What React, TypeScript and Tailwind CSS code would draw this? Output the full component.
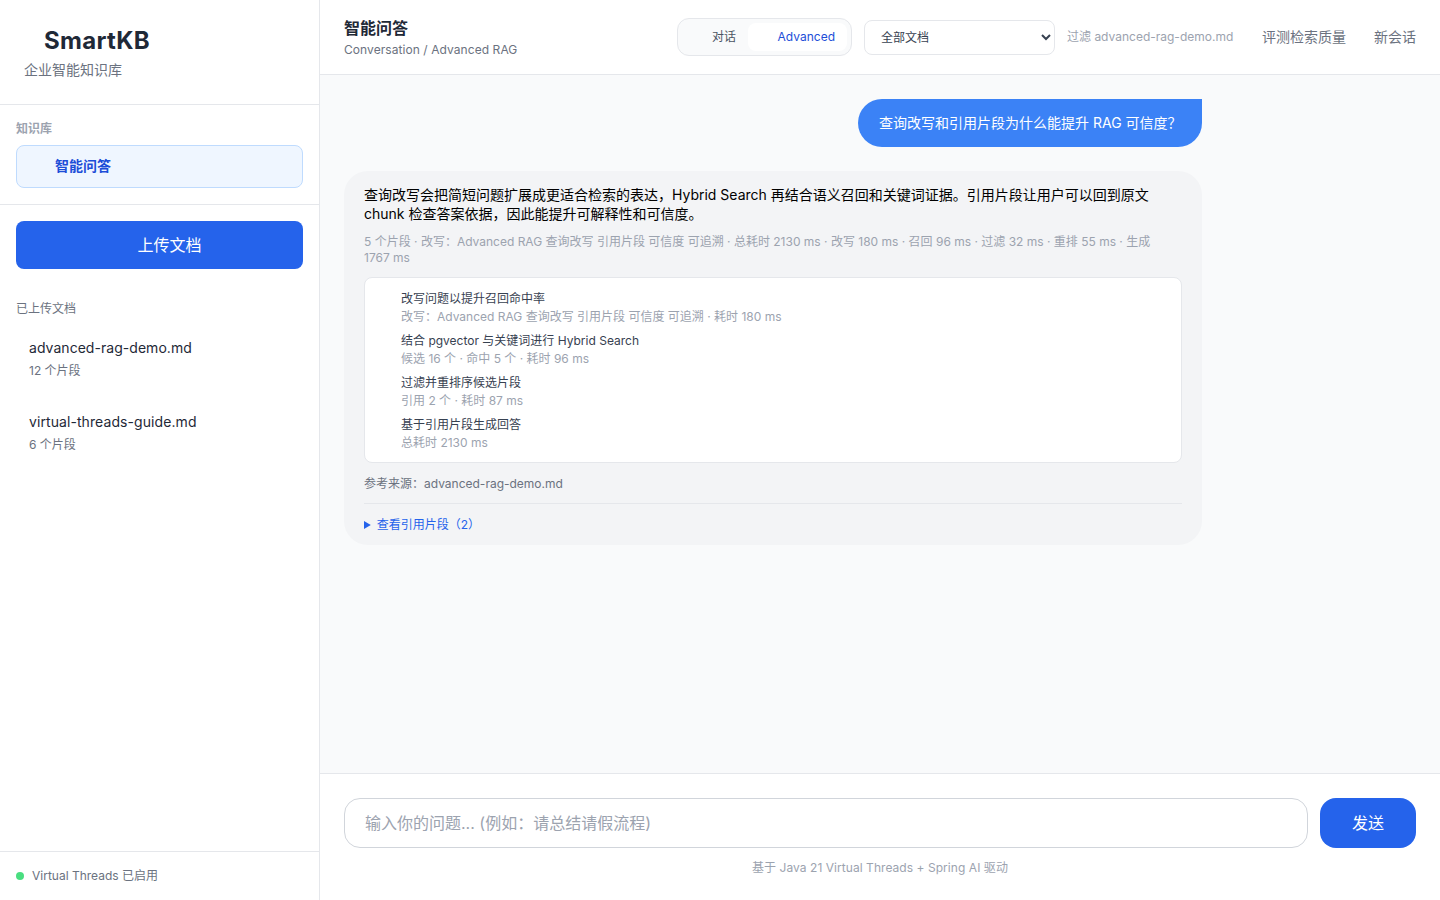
import React from "react";

const steps = [
  ["改写问题以提升召回命中率", "改写：Advanced RAG 查询改写 引用片段 可信度 可追溯 · 耗时 180 ms"],
  ["结合 pgvector 与关键词进行 Hybrid Search", "候选 16 个 · 命中 5 个 · 耗时 96 ms"],
  ["过滤并重排序候选片段", "引用 2 个 · 耗时 87 ms"],
  ["基于引用片段生成回答", "总耗时 2130 ms"],
];

export default function App() {
  return (
    <div className="flex h-screen w-full overflow-hidden bg-[#f9fafb] text-[#1f2937] font-['Inter','Noto_Sans_CJK_SC',sans-serif]">
      <aside className="flex w-80 shrink-0 flex-col border-r border-[#e5e7eb] bg-white">
        <div className="h-[105px] border-b border-[#e5e7eb] px-6 pt-[25px]">
          <h1 className="pl-5 text-2xl leading-8 font-bold tracking-[0.3px] text-[#1f2937]">SmartKB</h1>
          <p className="mt-[3px] text-sm leading-5 text-[#6b7280]">企业智能知识库</p>
        </div>
        <div className="h-[100px] border-b border-[#e5e7eb] px-4 pt-4">
          <div className="text-xs leading-4 font-semibold text-[#9ca3af]">知识库</div>
          <div className="mt-2 flex h-[43px] items-center rounded-lg border border-[#bfdbfe] bg-[#eff6ff] pb-0.5 pl-[38px] text-sm font-semibold text-[#1d4ed8]">智能问答</div>
        </div>
        <div className="flex-1 p-4">
          <button className="h-12 w-full rounded-lg bg-[#2563eb] pl-5 text-base text-white">上传文档</button>
          <div className="mt-8 text-xs leading-4 text-[#6b7280]">已上传文档</div>
          <ul className="mt-[21px] flex flex-col gap-[33px] pl-[13px]">
            <li>
              <div className="text-sm leading-5 tracking-[0.04px] text-[#1f2937]">advanced-rag-demo.md</div>
              <div className="mt-[5px] text-xs leading-4 text-[#6b7280]">12 个片段</div>
            </li>
            <li>
              <div className="text-sm leading-5 tracking-[0.08px] text-[#1f2937]">virtual-threads-guide.md</div>
              <div className="mt-[5px] text-xs leading-4 text-[#6b7280]">6 个片段</div>
            </li>
          </ul>
        </div>
        <div className="flex h-[49px] items-center gap-2 border-t border-[#e5e7eb] px-4 text-xs text-[#6b7280]">
          <span className="h-2 w-2 rounded-full bg-[#4ade80]" />
          Virtual Threads 已启用
        </div>
      </aside>

      <main className="flex min-w-0 flex-1 flex-col">
        <header className="flex h-[75px] shrink-0 items-center justify-between border-b border-[#e5e7eb] bg-white px-6">
          <div>
            <div className="text-base leading-6 font-semibold text-[#1f2937]">智能问答</div>
            <div className="mt-0.5 text-xs leading-4 tracking-[0.07px] text-[#6b7280]">Conversation / Advanced RAG</div>
          </div>
          <div className="flex items-center">
            <div className="flex h-[38px] w-[175px] items-center justify-between rounded-xl border border-[#e5e7eb] bg-[#f9fafb] pr-[4px] pl-[34px] text-xs">
              <span className="text-[#4b5563]">对话</span>
              <span className="flex h-7 w-[99px] items-center justify-end rounded-lg bg-white pr-3 text-[#1d4ed8]">Advanced</span>
            </div>
            <select className="ml-3 h-[35px] w-[191px] rounded-lg border border-[#e5e7eb] bg-white pl-3 text-xs text-[#374151]" defaultValue="all">
              <option value="all">全部文档</option>
            </select>
            <span className="ml-[12px] w-[167px] text-xs whitespace-nowrap text-[#9ca3af]">过滤 advanced-rag-demo.md</span>
            <button className="ml-7 text-sm text-[#6b7280]">评测检索质量</button>
            <button className="ml-7 text-sm text-[#6b7280]">新会话</button>
          </div>
        </header>

        <section className="flex flex-1 flex-col gap-6 overflow-hidden px-6 pt-6">
          <div className="flex max-w-[80%] justify-end">
            <div className="flex h-12 items-center rounded-3xl rounded-tr-none bg-[#3b82f6] pr-5 pl-[21px] text-sm text-white">
              查询改写和引用片段为什么能提升 RAG 可信度？
            </div>
          </div>
          <div className="max-w-[80%] rounded-3xl bg-[#f3f4f6] p-5 pt-[14px] pb-3">
            <p className="text-sm leading-[19px] text-black">
              查询改写会把简短问题扩展成更适合检索的表达，Hybrid Search 再结合语义召回和关键词证据。引用片段让用户可以回到原文 chunk 检查答案依据，因此能提升可解释性和可信度。
            </p>
            <p className="mt-[11px] text-xs leading-4 text-[#9ca3af]">
              5 个片段 · 改写：Advanced RAG 查询改写 引用片段 可信度 可追溯 · 总耗时 2130 ms · 改写 180 ms · 召回 96 ms · 过滤 32 ms · 重排 55 ms · 生成
              <br />
              1767 ms
            </p>
            <div className="mt-[11px] flex flex-col gap-[6px] rounded-lg border border-[#e5e7eb] bg-white pt-3 pr-4 pb-[10px] pl-9">
              {steps.map(([title, detail]) => (
                <div key={title}>
                  <div className="text-xs leading-[18px] text-[#374151]">{title}</div>
                  <div className="text-xs leading-[18px] text-[#9ca3af]">{detail}</div>
                </div>
              ))}
            </div>
            <div className="mt-[13px] text-xs leading-4 text-[#6b7280]">参考来源：advanced-rag-demo.md</div>
            <div className="mt-[11px] border-t border-[#e5e7eb] pt-[13px]">
              <details>
                <summary className="text-xs leading-4 text-[#2563eb]">查看引用片段（2）</summary>
              </details>
            </div>
          </div>
        </section>

        <footer className="h-[127px] shrink-0 border-t border-[#e5e7eb] bg-white px-6 pt-6">
          <div className="flex gap-3">
            <input
              className="h-[50px] flex-1 rounded-2xl border border-[#d1d5db] px-5 text-base outline-none placeholder:text-[#9ca3af]"
              placeholder="输入你的问题... (例如：请总结请假流程)"
            />
            <button className="h-[50px] w-24 rounded-2xl bg-[#2563eb] text-base text-white">发送</button>
          </div>
          <div className="mt-3 text-center text-xs leading-4 tracking-[0.05px] text-[#9ca3af]">基于 Java 21 Virtual Threads + Spring AI 驱动</div>
        </footer>
      </main>
    </div>
  );
}
